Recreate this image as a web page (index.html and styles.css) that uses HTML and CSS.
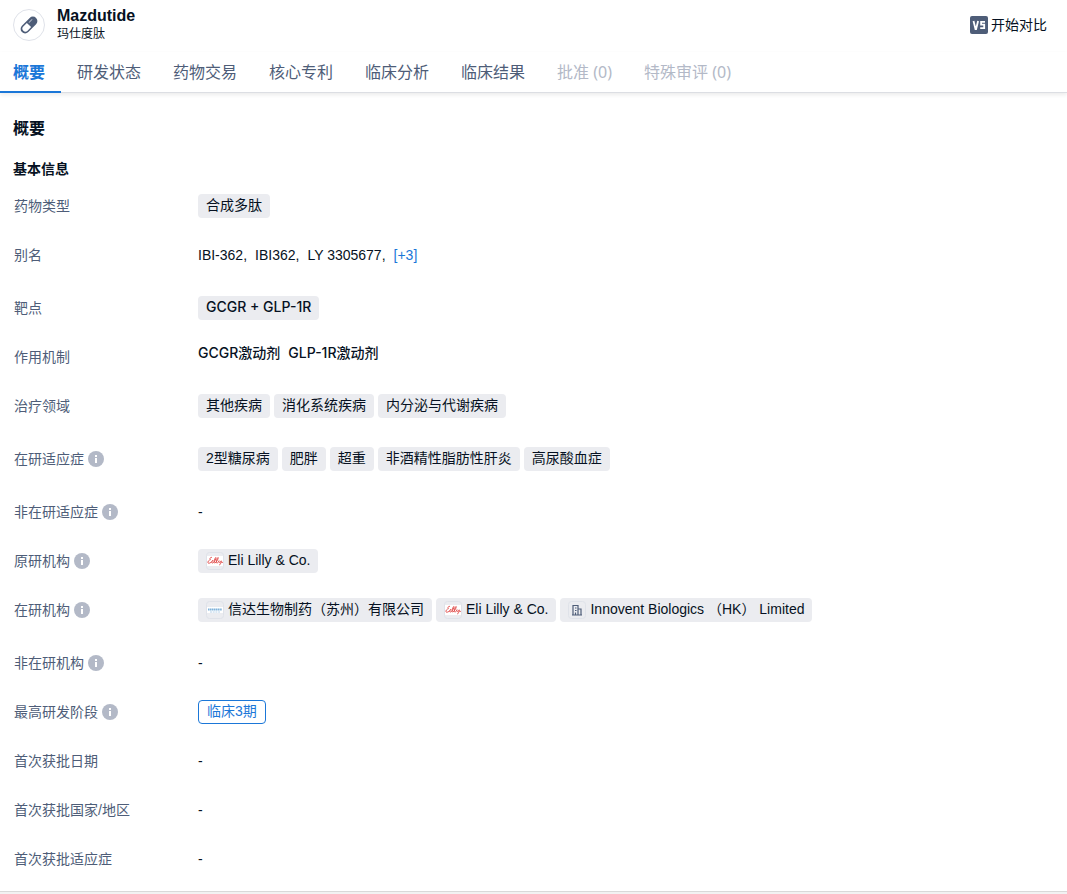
FILE: index.html
```html
<!DOCTYPE html>
<html lang="zh-CN">
<head>
    <meta charset="UTF-8">
    <meta name="viewport" content="width=device-width, initial-scale=1.0">
    <title>Mazdutide</title>
    <link rel="stylesheet" href="styles.css">
</head>
<body>
    <svg class="defs" aria-hidden="true">
        <symbol id="info" viewBox="0 0 16 16">
            <circle cx="8" cy="8" r="8" fill="#b3b9c7"/>
            <path d="M7 4h2v2H7zM7 7h2v5H7z" fill="#fff"/>
        </symbol>
        <symbol id="lilly" viewBox="0 0 18 18">
            <rect x=".5" y=".5" width="17" height="17" rx="3" fill="none" stroke="#dfe2e9"/>
            <path d="M1 4h16v10H1z" fill="#fff"/>
            <path d="M6 5.500C4.500 4.800 3.200 6.800 4.500 7.600 2.300 8.200 1 10.800 2.500 11.200c1.700.3 3.900-1.700 4.700-3.200M6.500 8.500c-1 1.500-1 2.500 0 2.500 1.500 0 4-4.500 3.500-5.500-.9-.4-2.800 5.300-1.300 5.500 1.500 0 4-4.500 3.500-5.500-.9-.4-2.800 5.300-1.300 5.500.9 0 1.600-1.200 2.100-2.300-.4 1.200-.3 1.900.3 1.900.7 0 1.400-.9 1.900-1.800-.1 2 .8 2.200 1.800 1.200M15 10c-.3 1.800-1 3-1.900 3" fill="none" stroke="#e04a48" stroke-width=".9"/>
        </symbol>
    </svg>

    <main class="card">
        <header class="header">
            <span class="avatar">
                <svg width="18" height="18" viewBox="0 0 18 18">
                    <g transform="rotate(-45 9 9)">
                        <rect x="-1" y="4.500" width="20" height="9" rx="4.500" fill="#4e5d78"/>
                        <path d="M9 6H4a3 3 0 0 0 0 6h5z" fill="#fff"/>
                        <path d="M11 7.200h4" stroke="#b3b9c7" stroke-linecap="round"/>
                    </g>
                </svg>
            </span>
            <div class="names">
                <h1>Mazdutide</h1>
                <p>玛仕度肽</p>
            </div>
            <button type="button" class="compare">
                <svg width="18" height="18" viewBox="0 0 18 18">
                    <rect width="18" height="18" rx="2" fill="#4e5d78"/>
                    <path d="M3.500 5l2 8h.6l2-8M15 5.900h-3.900v2.700h3.100v3.500h-4" fill="none" stroke="#fff" stroke-width="1.800"/>
                </svg>
                开始对比
            </button>
        </header>

        <nav class="tabs">
            <a href="#overview" class="active">概要</a>
            <a href="#status">研发状态</a>
            <a href="#deals">药物交易</a>
            <a href="#patents">核心专利</a>
            <a href="#analysis">临床分析</a>
            <a href="#results">临床结果</a>
            <a href="#approval" class="disabled">批准 (0)</a>
            <a href="#review" class="disabled">特殊审评 (0)</a>
        </nav>

        <section class="overview" id="overview">
            <h2>概要</h2>
            <h3>基本信息</h3>
            <dl>
                <div class="row">
                    <dt>药物类型</dt>
                    <dd><span class="tag">合成多肽</span></dd>
                </div>
                <div class="row tall">
                    <dt>别名</dt>
                    <dd class="aliases"><span>IBI-362,</span><span>IBI362,</span><span>LY 3305677,</span><a href="#more">[+3]</a></dd>
                </div>
                <div class="row">
                    <dt>靶点</dt>
                    <dd><span class="tag target">GCGR + GLP-1R</span></dd>
                </div>
                <div class="row">
                    <dt>作用机制</dt>
                    <dd class="mechanism"><span>GCGR激动剂</span><span>GLP-1R激动剂</span></dd>
                </div>
                <div class="row tall">
                    <dt>治疗领域</dt>
                    <dd><span class="tag">其他疾病</span><span class="tag">消化系统疾病</span><span class="tag">内分泌与代谢疾病</span></dd>
                </div>
                <div class="row tall">
                    <dt>在研适应症<svg class="info"><use href="#info"/></svg></dt>
                    <dd><span class="tag">2型糖尿病</span><span class="tag">肥胖</span><span class="tag">超重</span><span class="tag">非酒精性脂肪性肝炎</span><span class="tag">高尿酸血症</span></dd>
                </div>
                <div class="row">
                    <dt>非在研适应症<svg class="info"><use href="#info"/></svg></dt>
                    <dd>-</dd>
                </div>
                <div class="row">
                    <dt>原研机构<svg class="info"><use href="#info"/></svg></dt>
                    <dd><span class="tag"><svg class="logo"><use href="#lilly"/></svg>Eli Lilly &amp; Co.</span></dd>
                </div>
                <div class="row tall">
                    <dt>在研机构<svg class="info"><use href="#info"/></svg></dt>
                    <dd>
                        <span class="tag">
                            <svg class="logo" viewBox="0 0 18 18">
                                <rect x=".5" y=".5" width="17" height="17" rx="3" fill="none" stroke="#dfe2e9"/>
                                <path d="M1 6h16v6H1z" fill="#fff"/>
                                <path d="M2 8.500h14" stroke="#7fb2da" stroke-width="2" stroke-dasharray="1.500 .4"/>
                                <path d="M4 11h10" stroke="#b5d0e8" stroke-dasharray="2 .7"/>
                            </svg>信达生物制药（苏州）有限公司</span>
                        <span class="tag"><svg class="logo"><use href="#lilly"/></svg>Eli Lilly &amp; Co.</span>
                        <span class="tag">
                            <svg class="logo" viewBox="0 0 18 18">
                                <rect x=".5" y=".5" width="17" height="17" rx="3" fill="none" stroke="#dfe2e9"/>
                                <path d="M5 14V4.500h5V14M10 8h3v6M4 14h10M7 7h1.500M7 9.500h1.500M7.500 14v-2.500" fill="none" stroke="#4e5d78" stroke-width="1.200"/>
                            </svg>Innovent Biologics （HK） Limited</span>
                    </dd>
                </div>
                <div class="row">
                    <dt>非在研机构<svg class="info"><use href="#info"/></svg></dt>
                    <dd>-</dd>
                </div>
                <div class="row">
                    <dt>最高研发阶段<svg class="info"><use href="#info"/></svg></dt>
                    <dd><span class="tag phase">临床3期</span></dd>
                </div>
                <div class="row">
                    <dt>首次获批日期</dt>
                    <dd>-</dd>
                </div>
                <div class="row">
                    <dt>首次获批国家/地区</dt>
                    <dd>-</dd>
                </div>
                <div class="row">
                    <dt>首次获批适应症</dt>
                    <dd>-</dd>
                </div>
            </dl>
        </section>
    </main>
</body>
</html>
```
FILE: styles.css
```css
* {
    box-sizing: border-box;
    margin: 0;
    padding: 0;
}

body {
    font-family: "Liberation Sans", "Noto Sans CJK SC", sans-serif;
    font-size: 14px;
    color: #061122;
    background: #f2f2f2;
}

a {
    text-decoration: none;
}

.defs {
    display: none;
}

.card {
    background: #fff;
    border-bottom: 1px solid #d9d9d9;
}

.header {
    display: flex;
    align-items: center;
    gap: 12px;
    height: 52px;
    padding: 0 20px 2px 13px;
}

.avatar {
    display: flex;
    align-items: center;
    justify-content: center;
    width: 32px;
    height: 32px;
    border: 1px solid #dfe2e9;
    border-radius: 50%;
}

.names h1 {
    font-size: 16px;
    line-height: 18px;
}

.names p {
    font-size: 12px;
    line-height: 18px;
}

.compare {
    display: flex;
    align-items: center;
    gap: 3px;
    margin-left: auto;
    font: inherit;
    line-height: 20px;
    color: inherit;
    background: none;
    border: none;
    cursor: pointer;
}

.tabs {
    display: flex;
    height: 41px;
    border-bottom: 1px solid #dcdee3;
    box-shadow: 0 2px 4px rgba(0, 0, 0, 0.08);
}

.tabs a {
    height: 41px;
    padding: 0 16px;
    font-family: "Noto Sans", "Noto Sans CJK SC", sans-serif;
    font-size: 16px;
    line-height: 40px;
    color: #4e5d78;
    white-space: nowrap;
}

.tabs a.active {
    padding-left: 13px;
    font-weight: bold;
    color: #1b77d8;
    border-bottom: 2px solid #1b77d8;
}

.tabs a.disabled {
    color: #b3b9c7;
}

.overview {
    padding: 24px 13px 0;
}

.overview h2 {
    font-size: 16px;
    line-height: 24px;
}

.overview h3 {
    margin: 16px 0 13px;
    font-size: 14px;
    line-height: 24px;
}

.overview dl {
    padding: 0 0 20px 1px;
}

.row {
    display: flex;
    margin-bottom: 25px;
    line-height: 24px;
}

.row.tall {
    margin-bottom: 29px;
}

.row:last-child {
    margin-bottom: 0;
}

.row dt {
    display: flex;
    flex: 0 0 184px;
    align-items: center;
    gap: 4px;
    height: 24px;
    color: #4e5d78;
}

.row dd {
    display: flex;
    flex-wrap: wrap;
    gap: 4px;
}

.info {
    width: 16px;
    height: 16px;
}

.tag {
    display: flex;
    align-items: center;
    height: 24px;
    padding: 0 8px 2px;
    background: #ebecf0;
    border-radius: 4px;
}

.logo {
    width: 18px;
    height: 18px;
    margin: 2px 4px 0 0;
}

.target,
.row .mechanism {
    font-family: Inter, "Noto Sans CJK SC", sans-serif;
    font-weight: 500;
}

.row .aliases,
.row .mechanism {
    gap: 8px;
}

.row .mechanism {
    line-height: 16px;
}

.aliases a {
    color: #1b77d8;
}

.phase {
    color: #1b77d8;
    background: #fff;
    border: 1px solid #1b77d8;
}
```
